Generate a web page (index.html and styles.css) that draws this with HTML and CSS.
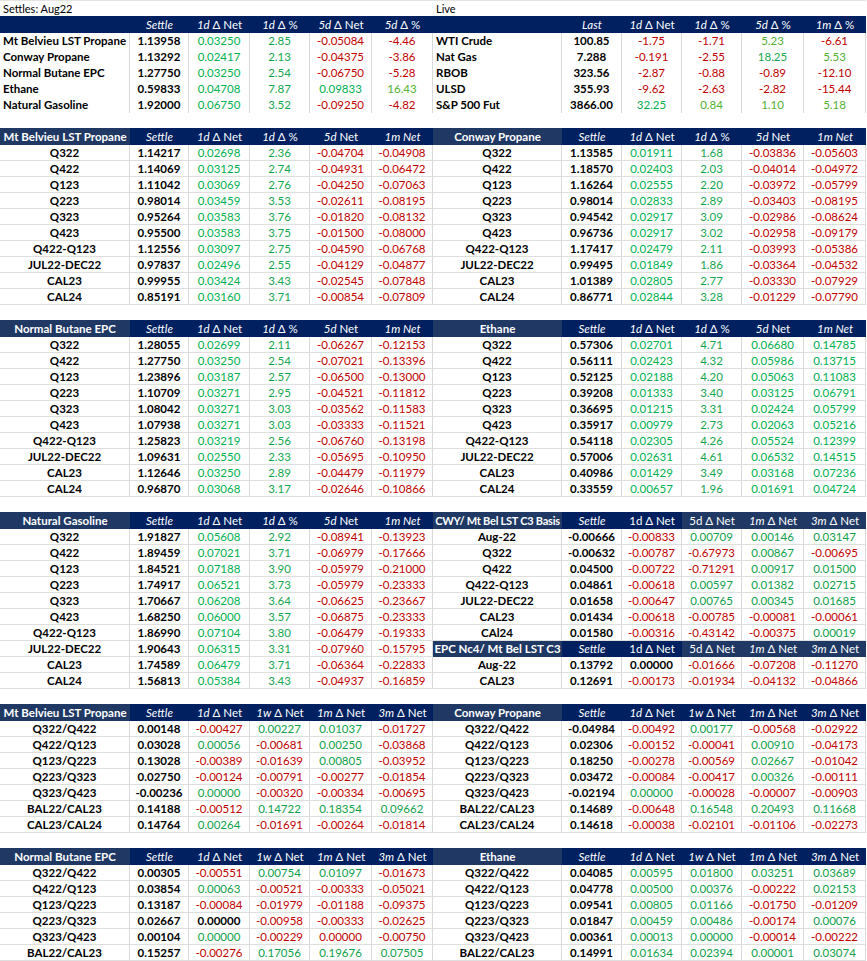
FILE: index.html
```html
<!DOCTYPE html>
<html>
<head>
<meta charset="utf-8">
<link rel="stylesheet" href="styles.css">
</head>
<body>
<div class="blk top">
  <div class="t L">
    <div class="title">Settles: Aug22</div>
    <div class="r h"><span></span><span><em>Settle</em></span><span><em>1d</em> Δ Net</span><span><em>1d</em> Δ %</span><span><em>5d</em> Δ Net</span><span><em>5d</em> Δ %</span></div>
    <div class="r"><b>Mt Belvieu LST Propane</b><b>1.13958</b><span class="g">0.03250</span><span class="g2">2.85</span><span class="rd">-0.05084</span><span class="rd">-4.46</span></div>
    <div class="r"><b>Conway Propane</b><b>1.13292</b><span class="g">0.02417</span><span class="g2">2.13</span><span class="rd">-0.04375</span><span class="rd">-3.86</span></div>
    <div class="r"><b>Normal Butane EPC</b><b>1.27750</b><span class="g">0.03250</span><span class="g2">2.54</span><span class="rd">-0.06750</span><span class="rd">-5.28</span></div>
    <div class="r"><b>Ethane</b><b>0.59833</b><span class="g">0.04708</span><span class="g2">7.87</span><span class="g">0.09833</span><span class="g3">16.43</span></div>
    <div class="r"><b>Natural Gasoline</b><b>1.92000</b><span class="g">0.06750</span><span class="g2">3.52</span><span class="rd">-0.09250</span><span class="rd">-4.82</span></div>
  </div>
  <div class="t R">
    <div class="title">Live</div>
    <div class="r h"><span></span><span><em>Last</em></span><span><em>1d</em> Δ Net</span><span><em>1d</em> Δ %</span><span><em>5d</em> Δ %</span><span><em>1m</em> Δ %</span></div>
    <div class="r"><b>WTI Crude</b><b>100.85</b><span class="rd">-1.75</span><span class="rd">-1.71</span><span class="g3">5.23</span><span class="rd">-6.61</span></div>
    <div class="r"><b>Nat Gas</b><b>7.288</b><span class="rd">-0.191</span><span class="rd">-2.55</span><span class="g2">18.25</span><span class="g3">5.53</span></div>
    <div class="r"><b>RBOB</b><b>323.56</b><span class="rd">-2.87</span><span class="rd">-0.88</span><span class="rd">-0.89</span><span class="rd">-12.10</span></div>
    <div class="r"><b>ULSD</b><b>355.93</b><span class="rd">-9.62</span><span class="rd">-2.63</span><span class="rd">-2.82</span><span class="rd">-15.44</span></div>
    <div class="r"><b>S&amp;P 500 Fut</b><b>3866.00</b><span class="g">32.25</span><span class="g3">0.84</span><span class="g3">1.10</span><span class="g3">5.18</span></div>
  </div>
</div>

<div class="blk">
  <div class="t L">
    <div class="r h"><span class="lab">Mt Belvieu LST Propane</span><span><em>Settle</em></span><span><em>1d</em> Δ Net</span><span><em>1d</em> Δ %</span><span><em>5d</em> Net</span><span><em>1m Net</em></span></div>
    <div class="r"><b>Q322</b><b>1.14217</b><span class="g">0.02698</span><span class="g2">2.36</span><span class="rd">-0.04704</span><span class="rd">-0.04908</span></div>
    <div class="r"><b>Q422</b><b>1.14069</b><span class="g">0.03125</span><span class="g2">2.74</span><span class="rd">-0.04931</span><span class="rd">-0.06472</span></div>
    <div class="r"><b>Q123</b><b>1.11042</b><span class="g">0.03069</span><span class="g2">2.76</span><span class="rd">-0.04250</span><span class="rd">-0.07063</span></div>
    <div class="r"><b>Q223</b><b>0.98014</b><span class="g">0.03459</span><span class="g2">3.53</span><span class="rd">-0.02611</span><span class="rd">-0.08195</span></div>
    <div class="r"><b>Q323</b><b>0.95264</b><span class="g">0.03583</span><span class="g2">3.76</span><span class="rd">-0.01820</span><span class="rd">-0.08132</span></div>
    <div class="r"><b>Q423</b><b>0.95500</b><span class="g">0.03583</span><span class="g2">3.75</span><span class="rd">-0.01500</span><span class="rd">-0.08000</span></div>
    <div class="r"><b>Q422-Q123</b><b>1.12556</b><span class="g">0.03097</span><span class="g2">2.75</span><span class="rd">-0.04590</span><span class="rd">-0.06768</span></div>
    <div class="r"><b>JUL22-DEC22</b><b>0.97837</b><span class="g">0.02496</span><span class="g2">2.55</span><span class="rd">-0.04129</span><span class="rd">-0.04877</span></div>
    <div class="r"><b>CAL23</b><b>0.99955</b><span class="g">0.03424</span><span class="g2">3.43</span><span class="rd">-0.02545</span><span class="rd">-0.07848</span></div>
    <div class="r"><b>CAL24</b><b>0.85191</b><span class="g">0.03160</span><span class="g2">3.71</span><span class="rd">-0.00854</span><span class="rd">-0.07809</span></div>
  </div>
  <div class="t R">
    <div class="r h"><span class="lab">Conway Propane</span><span><em>Settle</em></span><span><em>1d</em> Δ Net</span><span><em>1d</em> Δ %</span><span><em>5d</em> Net</span><span><em>1m Net</em></span></div>
    <div class="r"><b>Q322</b><b>1.13585</b><span class="g">0.01911</span><span class="g2">1.68</span><span class="rd">-0.03836</span><span class="rd">-0.05603</span></div>
    <div class="r"><b>Q422</b><b>1.18570</b><span class="g">0.02403</span><span class="g2">2.03</span><span class="rd">-0.04014</span><span class="rd">-0.04972</span></div>
    <div class="r"><b>Q123</b><b>1.16264</b><span class="g">0.02555</span><span class="g2">2.20</span><span class="rd">-0.03972</span><span class="rd">-0.05799</span></div>
    <div class="r"><b>Q223</b><b>0.98014</b><span class="g">0.02833</span><span class="g2">2.89</span><span class="rd">-0.03403</span><span class="rd">-0.08195</span></div>
    <div class="r"><b>Q323</b><b>0.94542</b><span class="g">0.02917</span><span class="g2">3.09</span><span class="rd">-0.02986</span><span class="rd">-0.08624</span></div>
    <div class="r"><b>Q423</b><b>0.96736</b><span class="g">0.02917</span><span class="g2">3.02</span><span class="rd">-0.02958</span><span class="rd">-0.09179</span></div>
    <div class="r"><b>Q422-Q123</b><b>1.17417</b><span class="g">0.02479</span><span class="g2">2.11</span><span class="rd">-0.03993</span><span class="rd">-0.05386</span></div>
    <div class="r"><b>JUL22-DEC22</b><b>0.99495</b><span class="g">0.01849</span><span class="g2">1.86</span><span class="rd">-0.03364</span><span class="rd">-0.04532</span></div>
    <div class="r"><b>CAL23</b><b>1.01389</b><span class="g">0.02805</span><span class="g2">2.77</span><span class="rd">-0.03330</span><span class="rd">-0.07929</span></div>
    <div class="r"><b>CAL24</b><b>0.86771</b><span class="g">0.02844</span><span class="g2">3.28</span><span class="rd">-0.01229</span><span class="rd">-0.07790</span></div>
  </div>
</div>

<div class="blk">
  <div class="t L">
    <div class="r h"><span class="lab">Normal Butane EPC</span><span><em>Settle</em></span><span><em>1d</em> Δ Net</span><span><em>1d</em> Δ %</span><span><em>5d</em> Net</span><span><em>1m Net</em></span></div>
    <div class="r"><b>Q322</b><b>1.28055</b><span class="g">0.02699</span><span class="g2">2.11</span><span class="rd">-0.06267</span><span class="rd">-0.12153</span></div>
    <div class="r"><b>Q422</b><b>1.27750</b><span class="g">0.03250</span><span class="g2">2.54</span><span class="rd">-0.07021</span><span class="rd">-0.13396</span></div>
    <div class="r"><b>Q123</b><b>1.23896</b><span class="g">0.03187</span><span class="g2">2.57</span><span class="rd">-0.06500</span><span class="rd">-0.13000</span></div>
    <div class="r"><b>Q223</b><b>1.10709</b><span class="g">0.03271</span><span class="g2">2.95</span><span class="rd">-0.04521</span><span class="rd">-0.11812</span></div>
    <div class="r"><b>Q323</b><b>1.08042</b><span class="g">0.03271</span><span class="g2">3.03</span><span class="rd">-0.03562</span><span class="rd">-0.11583</span></div>
    <div class="r"><b>Q423</b><b>1.07938</b><span class="g">0.03271</span><span class="g2">3.03</span><span class="rd">-0.03333</span><span class="rd">-0.11521</span></div>
    <div class="r"><b>Q422-Q123</b><b>1.25823</b><span class="g">0.03219</span><span class="g2">2.56</span><span class="rd">-0.06760</span><span class="rd">-0.13198</span></div>
    <div class="r"><b>JUL22-DEC22</b><b>1.09631</b><span class="g">0.02550</span><span class="g2">2.33</span><span class="rd">-0.05695</span><span class="rd">-0.10950</span></div>
    <div class="r"><b>CAL23</b><b>1.12646</b><span class="g">0.03250</span><span class="g2">2.89</span><span class="rd">-0.04479</span><span class="rd">-0.11979</span></div>
    <div class="r"><b>CAL24</b><b>0.96870</b><span class="g">0.03068</span><span class="g2">3.17</span><span class="rd">-0.02646</span><span class="rd">-0.10866</span></div>
  </div>
  <div class="t R">
    <div class="r h"><span class="lab">Ethane</span><span><em>Settle</em></span><span><em>1d</em> Δ Net</span><span><em>1d</em> Δ %</span><span><em>5d</em> Net</span><span><em>1m Net</em></span></div>
    <div class="r"><b>Q322</b><b>0.57306</b><span class="g">0.02701</span><span class="g2">4.71</span><span class="g">0.06680</span><span class="g">0.14785</span></div>
    <div class="r"><b>Q422</b><b>0.56111</b><span class="g">0.02423</span><span class="g2">4.32</span><span class="g">0.05986</span><span class="g">0.13715</span></div>
    <div class="r"><b>Q123</b><b>0.52125</b><span class="g">0.02188</span><span class="g2">4.20</span><span class="g">0.05063</span><span class="g">0.11083</span></div>
    <div class="r"><b>Q223</b><b>0.39208</b><span class="g">0.01333</span><span class="g2">3.40</span><span class="g">0.03125</span><span class="g">0.06791</span></div>
    <div class="r"><b>Q323</b><b>0.36695</b><span class="g">0.01215</span><span class="g2">3.31</span><span class="g">0.02424</span><span class="g">0.05799</span></div>
    <div class="r"><b>Q423</b><b>0.35917</b><span class="g">0.00979</span><span class="g2">2.73</span><span class="g">0.02063</span><span class="g">0.05216</span></div>
    <div class="r"><b>Q422-Q123</b><b>0.54118</b><span class="g">0.02305</span><span class="g2">4.26</span><span class="g">0.05524</span><span class="g">0.12399</span></div>
    <div class="r"><b>JUL22-DEC22</b><b>0.57006</b><span class="g">0.02631</span><span class="g2">4.61</span><span class="g">0.06532</span><span class="g">0.14515</span></div>
    <div class="r"><b>CAL23</b><b>0.40986</b><span class="g">0.01429</span><span class="g2">3.49</span><span class="g">0.03168</span><span class="g">0.07236</span></div>
    <div class="r"><b>CAL24</b><b>0.33559</b><span class="g">0.00657</span><span class="g2">1.96</span><span class="g">0.01691</span><span class="g">0.04724</span></div>
  </div>
</div>

<div class="blk">
  <div class="t L">
    <div class="r h"><span class="lab">Natural Gasoline</span><span><em>Settle</em></span><span><em>1d</em> Δ Net</span><span><em>1d</em> Δ %</span><span><em>5d</em> Net</span><span><em>1m Net</em></span></div>
    <div class="r"><b>Q322</b><b>1.91827</b><span class="g">0.05608</span><span class="g2">2.92</span><span class="rd">-0.08941</span><span class="rd">-0.13923</span></div>
    <div class="r"><b>Q422</b><b>1.89459</b><span class="g">0.07021</span><span class="g2">3.71</span><span class="rd">-0.06979</span><span class="rd">-0.17666</span></div>
    <div class="r"><b>Q123</b><b>1.84521</b><span class="g">0.07188</span><span class="g2">3.90</span><span class="rd">-0.05979</span><span class="rd">-0.21000</span></div>
    <div class="r"><b>Q223</b><b>1.74917</b><span class="g">0.06521</span><span class="g2">3.73</span><span class="rd">-0.05979</span><span class="rd">-0.23333</span></div>
    <div class="r"><b>Q323</b><b>1.70667</b><span class="g">0.06208</span><span class="g2">3.64</span><span class="rd">-0.06625</span><span class="rd">-0.23667</span></div>
    <div class="r"><b>Q423</b><b>1.68250</b><span class="g">0.06000</span><span class="g2">3.57</span><span class="rd">-0.06875</span><span class="rd">-0.23333</span></div>
    <div class="r"><b>Q422-Q123</b><b>1.86990</b><span class="g">0.07104</span><span class="g2">3.80</span><span class="rd">-0.06479</span><span class="rd">-0.19333</span></div>
    <div class="r"><b>JUL22-DEC22</b><b>1.90643</b><span class="g">0.06315</span><span class="g2">3.31</span><span class="rd">-0.07960</span><span class="rd">-0.15795</span></div>
    <div class="r"><b>CAL23</b><b>1.74589</b><span class="g">0.06479</span><span class="g2">3.71</span><span class="rd">-0.06364</span><span class="rd">-0.22833</span></div>
    <div class="r"><b>CAL24</b><b>1.56813</b><span class="g">0.05384</span><span class="g2">3.43</span><span class="rd">-0.04937</span><span class="rd">-0.16859</span></div>
  </div>
  <div class="t R">
    <div class="r h"><span class="lab tight">CWY/ Mt Bel LST C3 Basis</span><span><em>Settle</em></span><span>1d Δ Net</span><span class="lt">5d Δ Net</span><span class="lt"><em>1m</em> Δ Net</span><span class="lt"><em>3m</em> Δ Net</span></div>
    <div class="r"><b>Aug-22</b><b>-0.00666</b><span class="rd">-0.00833</span><span class="gs">0.00709</span><span class="gs">0.00146</span><span class="gs">0.03147</span></div>
    <div class="r"><b>Q322</b><b>-0.00632</b><span class="rd">-0.00787</span><span class="rd">-0.67973</span><span class="gs">0.00867</span><span class="rd">-0.00695</span></div>
    <div class="r"><b>Q422</b><b>0.04500</b><span class="rd">-0.00722</span><span class="rd">-0.71291</span><span class="gs">0.00917</span><span class="gs">0.01500</span></div>
    <div class="r"><b>Q422-Q123</b><b>0.04861</b><span class="rd">-0.00618</span><span class="gs">0.00597</span><span class="gs">0.01382</span><span class="gs">0.02715</span></div>
    <div class="r"><b>JUL22-DEC22</b><b>0.01658</b><span class="rd">-0.00647</span><span class="gs">0.00765</span><span class="gs">0.00345</span><span class="gs">0.01685</span></div>
    <div class="r"><b>CAL23</b><b>0.01434</b><span class="rd">-0.00618</span><span class="rd">-0.00785</span><span class="rd">-0.00081</span><span class="rd">-0.00061</span></div>
    <div class="r"><b>CAl24</b><b>0.01580</b><span class="rd">-0.00316</span><span class="rd">-0.43142</span><span class="rd">-0.00375</span><span class="gs">0.00019</span></div>
    <div class="r h hs"><span class="lab">EPC Nc4/ Mt Bel LST C3</span><span><em>Settle</em></span><span>1d Δ Net</span><span class="lt">5d Δ Net</span><span class="lt"><em>1m</em> Δ Net</span><span class="lt"><em>3m</em> Δ Net</span></div>
    <div class="r"><b>Aug-22</b><b>0.13792</b><b>0.00000</b><span class="rd">-0.01666</span><span class="rd">-0.07208</span><span class="rd">-0.11270</span></div>
    <div class="r"><b>CAL23</b><b>0.12691</b><span class="rd">-0.00173</span><span class="rd">-0.01934</span><span class="rd">-0.04132</span><span class="rd">-0.04866</span></div>
  </div>
</div>

<div class="blk">
  <div class="t L">
    <div class="r h"><span class="lab">Mt Belvieu LST Propane</span><span><em>Settle</em></span><span><em>1d</em> Δ Net</span><span><em>1w</em> Δ Net</span><span><em>1m</em> Δ Net</span><span><em>3m</em> Δ Net</span></div>
    <div class="r"><b>Q322/Q422</b><b>0.00148</b><span class="rd">-0.00427</span><span class="gs">0.00227</span><span class="gs">0.01037</span><span class="rd">-0.01727</span></div>
    <div class="r"><b>Q422/Q123</b><b>0.03028</b><span class="gs">0.00056</span><span class="rd">-0.00681</span><span class="gs">0.00250</span><span class="rd">-0.03868</span></div>
    <div class="r"><b>Q123/Q223</b><b>0.13028</b><span class="rd">-0.00389</span><span class="rd">-0.01639</span><span class="gs">0.00805</span><span class="rd">-0.03952</span></div>
    <div class="r"><b>Q223/Q323</b><b>0.02750</b><span class="rd">-0.00124</span><span class="rd">-0.00791</span><span class="rd">-0.00277</span><span class="rd">-0.01854</span></div>
    <div class="r"><b>Q323/Q423</b><b>-0.00236</b><span class="gs">0.00000</span><span class="rd">-0.00320</span><span class="rd">-0.00334</span><span class="rd">-0.00695</span></div>
    <div class="r"><b>BAL22/CAL23</b><b>0.14188</b><span class="rd">-0.00512</span><span class="gs">0.14722</span><span class="gs">0.18354</span><span class="gs">0.09662</span></div>
    <div class="r"><b>CAL23/CAL24</b><b>0.14764</b><span class="gs">0.00264</span><span class="rd">-0.01691</span><span class="rd">-0.00264</span><span class="rd">-0.01814</span></div>
  </div>
  <div class="t R">
    <div class="r h"><span class="lab">Conway Propane</span><span><em>Settle</em></span><span><em>1d</em> Δ Net</span><span><em>1w</em> Δ Net</span><span><em>1m</em> Δ Net</span><span><em>3m</em> Δ Net</span></div>
    <div class="r"><b>Q322/Q422</b><b>-0.04984</b><span class="rd">-0.00492</span><span class="gs">0.00177</span><span class="rd">-0.00568</span><span class="rd">-0.02922</span></div>
    <div class="r"><b>Q422/Q123</b><b>0.02306</b><span class="rd">-0.00152</span><span class="rd">-0.00041</span><span class="gs">0.00910</span><span class="rd">-0.04173</span></div>
    <div class="r"><b>Q123/Q223</b><b>0.18250</b><span class="rd">-0.00278</span><span class="rd">-0.00569</span><span class="gs">0.02667</span><span class="rd">-0.01042</span></div>
    <div class="r"><b>Q223/Q323</b><b>0.03472</b><span class="rd">-0.00084</span><span class="rd">-0.00417</span><span class="gs">0.00326</span><span class="rd">-0.00111</span></div>
    <div class="r"><b>Q323/Q423</b><b>-0.02194</b><span class="gs">0.00000</span><span class="rd">-0.00028</span><span class="rd">-0.00007</span><span class="rd">-0.00903</span></div>
    <div class="r"><b>BAL22/CAL23</b><b>0.14689</b><span class="rd">-0.00648</span><span class="gs">0.16548</span><span class="gs">0.20493</span><span class="gs">0.11668</span></div>
    <div class="r"><b>CAL23/CAL24</b><b>0.14618</b><span class="rd">-0.00038</span><span class="rd">-0.02101</span><span class="rd">-0.01106</span><span class="rd">-0.02273</span></div>
  </div>
</div>

<div class="blk last">
  <div class="t L">
    <div class="r h"><span class="lab">Normal Butane EPC</span><span><em>Settle</em></span><span><em>1d</em> Δ Net</span><span><em>1w</em> Δ Net</span><span><em>1m</em> Δ Net</span><span><em>3m</em> Δ Net</span></div>
    <div class="r"><b>Q322/Q422</b><b>0.00305</b><span class="rd">-0.00551</span><span class="gs">0.00754</span><span class="gs">0.01097</span><span class="rd">-0.01673</span></div>
    <div class="r"><b>Q422/Q123</b><b>0.03854</b><span class="gs">0.00063</span><span class="rd">-0.00521</span><span class="rd">-0.00333</span><span class="rd">-0.05021</span></div>
    <div class="r"><b>Q123/Q223</b><b>0.13187</b><span class="rd">-0.00084</span><span class="rd">-0.01979</span><span class="rd">-0.01188</span><span class="rd">-0.09375</span></div>
    <div class="r"><b>Q223/Q323</b><b>0.02667</b><b>0.00000</b><span class="rd">-0.00958</span><span class="rd">-0.00333</span><span class="rd">-0.02625</span></div>
    <div class="r"><b>Q323/Q423</b><b>0.00104</b><span class="gs">0.00000</span><span class="rd">-0.00229</span><span class="rd">0.00000</span><span class="rd">-0.00750</span></div>
    <div class="r"><b>BAL22/CAL23</b><b>0.15257</b><span class="rd">-0.00276</span><span class="gs">0.17056</span><span class="gs">0.19676</span><span class="gs">0.07505</span></div>
  </div>
  <div class="t R">
    <div class="r h"><span class="lab">Ethane</span><span><em>Settle</em></span><span><em>1d</em> Δ Net</span><span><em>1w</em> Δ Net</span><span><em>1m</em> Δ Net</span><span><em>3m</em> Δ Net</span></div>
    <div class="r"><b>Q322/Q422</b><b>0.04085</b><span class="gs">0.00595</span><span class="gs">0.01800</span><span class="gs">0.03251</span><span class="gs">0.03689</span></div>
    <div class="r"><b>Q422/Q123</b><b>0.04778</b><span class="gs">0.00500</span><span class="gs">0.00376</span><span class="rd">-0.00222</span><span class="gs">0.02153</span></div>
    <div class="r"><b>Q123/Q223</b><b>0.09541</b><span class="gs">0.00805</span><span class="gs">0.01166</span><span class="rd">-0.01750</span><span class="rd">-0.01209</span></div>
    <div class="r"><b>Q223/Q323</b><b>0.01847</b><span class="gs">0.00459</span><span class="gs">0.00486</span><span class="rd">-0.00174</span><span class="gs">0.00076</span></div>
    <div class="r"><b>Q323/Q423</b><b>0.00361</b><span class="gs">0.00013</span><span class="gs">0.00000</span><span class="rd">-0.00014</span><span class="rd">-0.00222</span></div>
    <div class="r"><b>BAL22/CAL23</b><b>0.14991</b><span class="gs">0.01634</span><span class="gs">0.02394</span><span class="gs">0.00001</span><span class="gs">0.03074</span></div>
  </div>
</div>
</body>
</html>
```

FILE: styles.css
```css
html, body {
  margin: 0;
  padding: 0;
  background: #ffffff;
}
body {
  width: 867px;
  font-family: Lato, "Liberation Sans", sans-serif;
  font-size: 11.5px;
  color: #000000;
  overflow: hidden;
}
.blk {
  display: flex;
  align-items: flex-start;
  margin-bottom: 15px;
}
.blk.last {
  margin-bottom: 0;
}
.t {
  width: 433px;
  flex: none;
}
.title {
  height: 16px;
  line-height: 16px;
  padding-left: 3px;
  border-top: 1px solid #e4e4e4;
  box-sizing: border-box;
  font-size: 11px;
}
.r {
  display: grid;
  height: 16px;
}
.L .r {
  grid-template-columns: 130px 59px 61px 60px 62px 61px;
}
.R .r {
  grid-template-columns: 129px 60px 60px 60px 62px 62px;
}
.r > * {
  display: block;
  box-sizing: border-box;
  border-right: 1px solid #d9d9d9;
  border-bottom: 1px solid #dedede;
  text-align: center;
  line-height: 15px;
  white-space: nowrap;
  overflow: hidden;
  font-weight: normal;
}
.r > b {
  font-weight: bold;
}
.top .r > * {
  border-bottom: 0;
  line-height: 16px;
}
.top .r > *:first-child {
  text-align: left;
  padding-left: 3px;
}
.r.h {
  height: 17px;
  background: #002060;
  color: #ffffff;
}
.r.h > * {
  border: 0;
  line-height: 17px;
}
.r.h > .lab {
  background: #203864;
  font-weight: bold;
}
.r.h > .lab.tight {
  font-size: 11px;
  letter-spacing: -0.25px;
}
.r.h > .lt {
  background: #1f3864;
}
.r.hs {
  height: 16px;
}
.r.hs > * {
  line-height: 16px;
}
em {
  font-style: italic;
}
.g {
  color: #00b050;
}
.g2 {
  color: #14a650;
}
.g3 {
  color: #52b034;
}
.gs {
  color: #10a04a;
}
.rd {
  color: #c00000;
}
```
